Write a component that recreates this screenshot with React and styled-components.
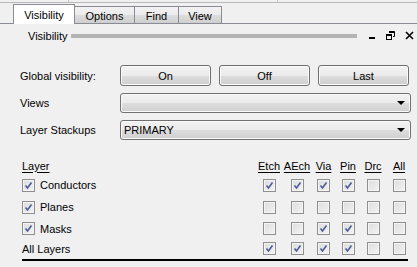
import React from "react";
import styled, { createGlobalStyle } from "styled-components";

const GlobalStyle = createGlobalStyle`
  html, body { margin: 0; padding: 0; background: #f0f0f0; }
  body { font-family: "Liberation Sans", Arial, sans-serif; font-size: 11px; color: #000; }
`;

const Frame = styled.div`
  width: 417px; height: 267px; overflow: hidden; background: #f0f0f0;
  font-family: "Liberation Sans", Arial, sans-serif; font-size: 11px;
`;

const TopStrip = styled.div`
  height: 2px; border-bottom: 1px solid #b9b9b9;
  display: flex;
  span { width: 68px; border-right: 1px solid #c8c8c8; }
  span + span { width: 208px; }
`;

const TabBar = styled.div`
  height: 20px; display: flex; align-items: flex-end; padding-left: 13px;
  border-bottom: 1px solid #898c95;
`;

const Tab = styled.div`
  height: ${p => (p.$active ? "20px" : "17px")};
  margin-bottom: ${p => (p.$active ? "-1px" : "0")};
  width: ${p => p.$w}px;
  box-sizing: border-box;
  border: 1px solid #898c95; border-bottom: none;
  margin-left: -1px;
  background: ${p => (p.$active ? "#fff" : "linear-gradient(#f2f2f2, #ebebeb 50%, #dddddd 51%, #cfcfcf)")};
  display: flex; align-items: center; justify-content: center;
  padding-top: ${p => (p.$active ? "0" : "1px")};
  position: relative; z-index: ${p => (p.$active ? 1 : 0)};
  &:first-child { margin-left: 0; }
`;

const TitleRow = styled.div`
  height: 23px; display: flex; align-items: center; padding: 0 0 0 28px;
`;

const TitleText = styled.span`
  margin-right: 3px;
`;

const Grip = styled.div`
  flex: 0 0 286px; height: 4px; background: #b4b4b4;
`;

const TitleIcons = styled.div`
  display: flex; align-items: center; gap: 10px; margin-left: 11px;
  svg { display: block; }
`;

const Form = styled.div`
  padding: 18px 6px 0 20px;
  display: flex; flex-direction: column; gap: 7px;
`;

const FormRow = styled.div`
  display: flex; align-items: center; height: ${p => p.$h || 20}px;
`;

const Label = styled.div`
  width: 100px;
`;

const Buttons = styled.div`
  display: flex; gap: 8px;
`;

const Button = styled.div`
  width: 91px; height: 21px; box-sizing: border-box;
  border: 1px solid #707070; border-radius: 3px;
  background: linear-gradient(#f2f2f2, #ebebeb 50%, #dddddd 51%, #cfcfcf);
  display: flex; align-items: center; justify-content: center;
  box-shadow: inset 0 0 0 1px #fbfbfb;
`;

const Combo = styled.div`
  width: 291px; height: 20px; box-sizing: border-box;
  border: 1px solid #707070; border-radius: 3px;
  background: linear-gradient(#f2f2f2, #ebebeb 50%, #dddddd 51%, #cfcfcf);
  display: flex; align-items: center; padding: 0 5px 0 3px;
  box-shadow: inset 0 0 0 1px #fbfbfb;
  span { flex: 1; }
`;

const Arrow = styled.i`
  width: 0; height: 0;
  border-left: 4px solid transparent; border-right: 4px solid transparent;
  border-top: 4px solid #000;
`;

const Layers = styled.div`
  margin: 17px 9px 0 22px;
  display: grid;
  grid-template-columns: 233px 28px 28px 25px 24px 26px 26px;
  grid-template-rows: 17px 22px 22px 21px 19px;
  align-items: center;
  border-bottom: 2px solid #000;
  padding-bottom: 1px;
`;

const Head = styled.div`
  text-decoration: underline; text-underline-offset: 2px;
  text-align: ${p => (p.$left ? "left" : "center")};
`;

const Cell = styled.div`
  display: flex; justify-content: center; align-items: center;
`;

const Name = styled.div`
  display: flex; align-items: center; gap: 5px;
`;

const Box = styled.span`
  width: 13px; height: 13px; box-sizing: border-box; display: inline-flex;
  align-items: center; justify-content: center;
  border: 1px solid #8f8f8f;
  background: linear-gradient(135deg, #dcdcdc, #f3f3f3);
  box-shadow: inset 0 0 0 1px #f4f4f4;
`;

function Check({ on }) {
  return (
    <Box>
      {on && (
        <svg width="9" height="9" viewBox="0 0 9 9">
          <path d="M1.5 4.5 L3.5 7 L7.5 1.5" fill="none" stroke="#4a5c9a" strokeWidth="1.6" />
        </svg>
      )}
    </Box>
  );
}

const cols = ["Etch", "AEch", "Via", "Pin", "Drc", "All"];
const rows = [
  { name: "Conductors", box: true, v: [1, 1, 1, 1, 0, 0] },
  { name: "Planes", box: true, v: [0, 0, 0, 0, 0, 0] },
  { name: "Masks", box: true, v: [0, 0, 1, 1, 0, 0] },
  { name: "All Layers", box: false, v: [1, 1, 1, 1, 0, 0] },
];

export default function App() {
  return (
    <Frame>
      <GlobalStyle />
      <TopStrip><span /><span /></TopStrip>
      <TabBar>
        <Tab $active $w={62}>Visibility</Tab>
        <Tab $w={61}>Options</Tab>
        <Tab $w={45}>Find</Tab>
        <Tab $w={44}>View</Tab>
      </TabBar>
      <TitleRow>
        <TitleText>Visibility</TitleText>
        <Grip />
        <TitleIcons>
          <svg width="8" height="9" viewBox="0 0 8 9"><rect x="1" y="6" width="6" height="2" fill="#000" /></svg>
          <svg width="9" height="9" viewBox="0 0 9 9">
            <path d="M3 0.5 H8.5 V5.5 H7" fill="none" stroke="#000" />
            <path d="M3 1 H8" stroke="#000" strokeWidth="2" />
            <rect x="0.5" y="3.5" width="5" height="5" fill="none" stroke="#000" />
            <path d="M0.5 4 H5.5" stroke="#000" strokeWidth="2" />
          </svg>
          <svg width="9" height="9" viewBox="0 0 9 9"><path d="M1 1 L8 8 M8 1 L1 8" stroke="#000" strokeWidth="1.6" /></svg>
        </TitleIcons>
      </TitleRow>
      <Form>
        <FormRow $h={21}>
          <Label>Global visibility:</Label>
          <Buttons>
            <Button>On</Button>
            <Button>Off</Button>
            <Button>Last</Button>
          </Buttons>
        </FormRow>
        <FormRow>
          <Label>Views</Label>
          <Combo><span /><Arrow /></Combo>
        </FormRow>
        <FormRow>
          <Label>Layer Stackups</Label>
          <Combo><span>PRIMARY</span><Arrow /></Combo>
        </FormRow>
      </Form>
      <Layers>
        <Head $left>Layer</Head>
        {cols.map(c => <Head key={c}>{c}</Head>)}
        {rows.map(r => (
          <React.Fragment key={r.name}>
            <Name>{r.box && <Check on />}{r.name}</Name>
            {r.v.map((v, i) => <Cell key={i}><Check on={!!v} /></Cell>)}
          </React.Fragment>
        ))}
      </Layers>
    </Frame>
  );
}
